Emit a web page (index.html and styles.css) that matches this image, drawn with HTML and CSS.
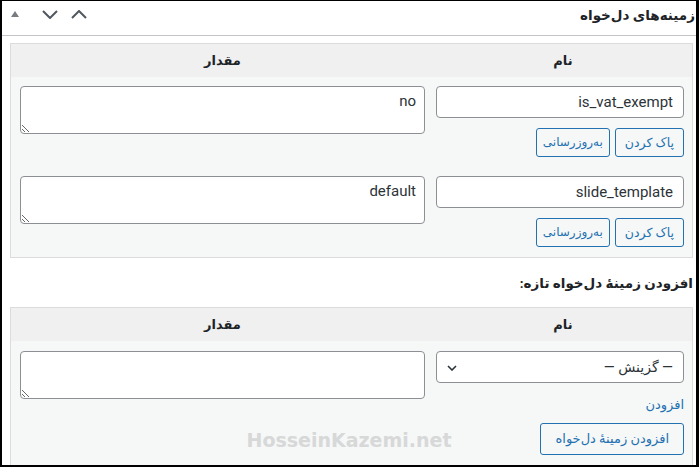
FILE: index.html
```html
<!DOCTYPE html>
<html lang="fa" dir="rtl">
<head>
<meta charset="utf-8">
<title>زمینه‌های دل‌خواه</title>
<link rel="stylesheet" href="styles.css">
</head>
<body>
<div class="frame">
  <div class="box-head">
    <h2 class="box-title">زمینه‌های دل‌خواه</h2>
    <div class="box-controls">
      <svg class="ic-tri" width="8" height="6" viewBox="0 0 8 6"><polygon points="0,6 4,0 8,6" fill="#787c82"/></svg>
      <svg class="ic-down" width="16" height="9" viewBox="0 0 16 9"><polyline points="1,1 8,8 15,1" fill="none" stroke="#50575e" stroke-width="2"/></svg>
      <svg class="ic-up" width="16" height="9" viewBox="0 0 16 9"><polyline points="1,8 8,1 15,8" fill="none" stroke="#50575e" stroke-width="2"/></svg>
    </div>
  </div>
  <div class="box-body">
    <div class="fields">
      <div class="row head-row">
        <div class="th">نام</div>
        <div class="th">مقدار</div>
      </div>
      <div class="row">
        <div class="cell name-cell">
          <input class="field" type="text" value="is_vat_exempt">
          <div class="btns">
            <button class="btn btn-del">پاک کردن</button>
            <button class="btn btn-upd">به‌روزرسانی</button>
          </div>
        </div>
        <div class="cell value-cell">
          <textarea class="area">no</textarea>
        </div>
      </div>
      <div class="row">
        <div class="cell name-cell">
          <input class="field" type="text" value="slide_template">
          <div class="btns">
            <button class="btn btn-del">پاک کردن</button>
            <button class="btn btn-upd">به‌روزرسانی</button>
          </div>
        </div>
        <div class="cell value-cell">
          <textarea class="area">default</textarea>
        </div>
      </div>
    </div>

    <p class="new-title">افزودن زمینهٔ دل‌خواه تازه:</p>

    <div class="fields">
      <div class="row head-row">
        <div class="th">نام</div>
        <div class="th">مقدار</div>
      </div>
      <div class="row">
        <div class="cell name-cell new-cell">
          <div class="select">
            <span class="select-text">— گزینش —</span>
            <svg class="select-chev" width="10" height="6" viewBox="0 0 10 6"><polyline points="1,1 5,5 9,1" fill="none" stroke="#2c3338" stroke-width="1.6"/></svg>
          </div>
          <a class="add-link" href="#">افزودن</a>
          <button class="btn btn-add">افزودن زمینهٔ دل‌خواه</button>
        </div>
        <div class="cell value-cell new-cell">
          <textarea class="area"></textarea>
        </div>
      </div>
    </div>
  </div>
  <div class="watermark">HosseinKazemi.net</div>
</div>
</body>
</html>
```

FILE: styles.css
```css
* { box-sizing: border-box; }
html, body { margin: 0; padding: 0; background: #fff; }
body {
  font-family: Roboto, "DejaVu Sans", sans-serif;
  font-size: 13px;
  color: #1d2327;
}
.frame {
  position: relative;
  width: 699px;
  height: 467px;
  border-style: solid;
  border-color: #000;
  border-width: 1px 3px 2px 2px;
  overflow: hidden;
  background: #fff;
}
.box-head {
  height: 35px;
  border-bottom: 1px solid #c3c4c7;
  display: flex;
  justify-content: space-between;
  align-items: flex-start;
  padding-right: 1px;
}
.box-title {
  margin: 0;
  padding-top: 4px;
  font-size: 13.5px;
  line-height: 20px;
  font-weight: 700;
  color: #1d2327;
}
.box-controls {
  direction: ltr;
  display: flex;
  align-items: flex-start;
  padding-left: 9px;
  padding-top: 9px;
}
.ic-tri { margin-top: 1px; }
.ic-down { margin-left: 23px; }
.ic-up { margin-left: 13px; }

.box-body {
  padding: 7px 3px 0 8px;
}
.fields {
  border: 1px solid #dcdcde;
  background: #f6f7f7;
}
.row {
  display: grid;
  grid-template-columns: 258px 1fr;
}
.head-row {
  background: #f0f0f1;
  height: 33px;
}
.th {
  text-align: center;
  font-weight: 700;
  font-size: 13px;
  line-height: 33px;
  color: #1d2327;
}
.cell { padding-top: 9px; padding-bottom: 10px; }
.name-cell { padding-right: 8px; padding-left: 2px; }
.value-cell { padding-right: 9px; padding-left: 9px; }
.new-cell { padding-top: 10px; }

.field {
  display: block;
  width: 100%;
  height: 32px;
  margin: 0;
  padding: 0 10px;
  border: 1px solid #8c8f94;
  border-radius: 4px;
  background: #fff;
  font-family: Roboto, "DejaVu Sans", sans-serif;
  font-size: 15px;
  color: #2c3338;
}
.area {
  display: block;
  width: 100%;
  height: 48px;
  margin: 0;
  padding: 4px 8px;
  border: 1px solid #8c8f94;
  border-radius: 4px;
  background: #fff;
  font-family: Roboto, "DejaVu Sans", sans-serif;
  font-size: 15px;
  line-height: 20px;
  color: #2c3338;
  resize: vertical;
}
.btns {
  display: flex;
  gap: 5px;
  margin-top: 10px;
}
.btn {
  height: 29px;
  margin: 0;
  padding: 0 8px;
  border: 1px solid #2271b1;
  border-radius: 3px;
  background: #f6f7f7;
  color: #2271b1;
  font-family: Roboto, "DejaVu Sans", sans-serif;
  font-size: 12.5px;
  line-height: 27px;
}
.btn-del { padding: 0 9px; }
.btn-upd { padding: 0 6px; font-size: 12px; }
.new-title {
  margin: 15px 0 14px;
  font-size: 13.5px;
  line-height: 20px;
  font-weight: 700;
  color: #1d2327;
}
.select {
  height: 32px;
  border: 1px solid #8c8f94;
  border-radius: 4px;
  background: #fff;
  display: flex;
  align-items: center;
  justify-content: space-between;
  padding: 0 10px 0 10px;
  font-size: 14px;
  color: #2c3338;
}
.select-chev { margin-top: 1px; }
.add-link {
  display: block;
  margin-top: 12px;
  line-height: 20px;
  font-size: 13px;
  color: #2271b1;
  text-decoration: none;
}
.btn-add {
  display: block;
  height: 32px;
  margin-top: 8px;
  padding: 0 14px;
  font-size: 13px;
  line-height: 30px;
}
.watermark {
  position: absolute;
  left: 0;
  right: 0;
  top: 429px;
  direction: ltr;
  text-align: center;
  font-family: "DejaVu Sans", sans-serif;
  font-weight: 700;
  font-size: 19px;
  line-height: 20px;
  color: #d7d8d8;
  pointer-events: none;
}
```
